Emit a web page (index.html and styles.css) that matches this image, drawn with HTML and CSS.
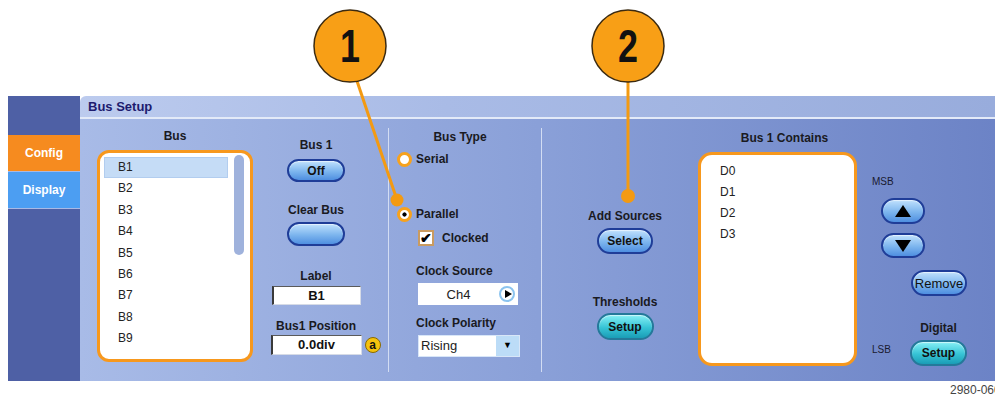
FILE: index.html
```html
<!DOCTYPE html>
<html lang="en">
<head>
<meta charset="UTF-8">
<title>Bus Setup</title>
<link rel="stylesheet" href="styles.css">
</head>
<body>
<div class="screen">

  <!-- Bus setup menu -->
  <div class="panel">
    <div class="tabs">
      <div class="tab tab-config">Config</div>
      <div class="tab tab-display">Display</div>
    </div>

    <div class="main">
      <div class="title">Bus Setup</div>
      <div class="body">

        <!-- Bus list -->
        <div class="col col-bus">
          <div class="head bus-head">Bus</div>
          <div class="listbox">
            <ul class="list">
              <li class="selected">B1</li>
              <li>B2</li>
              <li>B3</li>
              <li>B4</li>
              <li>B5</li>
              <li>B6</li>
              <li>B7</li>
              <li>B8</li>
              <li>B9</li>
            </ul>
            <div class="scrollbar"></div>
          </div>
        </div>

        <!-- Bus on/off, label, position -->
        <div class="col col-ctrl">
          <div class="head">Bus 1</div>
          <div class="pill btn-off">Off</div>
          <div class="head clear-head">Clear Bus</div>
          <div class="pill btn-clear"></div>
          <div class="head label-head">Label</div>
          <div class="field field-label">B1</div>
          <div class="head pos-head">Bus1 Position</div>
          <div class="field field-pos">0.0div<span class="badge">a</span></div>
        </div>

        <div class="divider"></div>

        <!-- Bus type -->
        <div class="col col-type">
          <div class="head type-head">Bus Type</div>
          <div class="radio-row serial-row"><span class="radio"></span>Serial</div>
          <div class="radio-row parallel-row"><span class="radio on"></span>Parallel</div>
          <div class="check-row"><span class="check">&#10004;</span>Clocked</div>
          <div class="head sub-head src-head">Clock Source</div>
          <div class="combo">
            <span class="combo-text">Ch4</span>
            <span class="play">
              <svg width="10" height="10" viewBox="0 0 10 10"><polygon points="2,1 9,5 2,9" fill="#000"/></svg>
            </span>
          </div>
          <div class="head sub-head pol-head">Clock Polarity</div>
          <div class="select">
            <span class="select-text">Rising</span>
            <span class="select-arrow">&#9660;</span>
          </div>
        </div>

        <div class="divider"></div>

        <!-- Sources and thresholds -->
        <div class="col col-src">
          <div class="head">Add Sources</div>
          <div class="pill btn-select">Select</div>
          <div class="head thr-head">Thresholds</div>
          <div class="pill teal btn-thr">Setup</div>
        </div>

        <!-- Bus contents -->
        <div class="col col-contains">
          <div class="head contains-head">Bus 1 Contains</div>
          <div class="listbox contains-box">
            <ul class="list contains-list">
              <li>D0</li>
              <li>D1</li>
              <li>D2</li>
              <li>D3</li>
            </ul>
          </div>
        </div>

        <!-- Order and digital setup -->
        <div class="col col-right">
          <div class="small">MSB</div>
          <div class="pill btn-arrow btn-up">
            <svg width="18" height="14" viewBox="0 0 18 14"><polygon points="9,1 17,13 1,13" fill="#000"/></svg>
          </div>
          <div class="pill btn-arrow btn-down">
            <svg width="18" height="14" viewBox="0 0 18 14"><polygon points="1,1 17,1 9,13" fill="#000"/></svg>
          </div>
          <div class="pill btn-remove">Remove</div>
          <div class="bottom-row">
            <div class="small lsb">LSB</div>
            <div class="digital">
              <div class="head">Digital</div>
              <div class="pill teal btn-digital">Setup</div>
            </div>
          </div>
        </div>

      </div>
    </div>
  </div>

  <div class="figure-id">2980-060</div>
</div>

<!-- Callouts -->
<svg class="callouts" width="995" height="395" viewBox="0 0 995 395">
  <line x1="357" y1="81" x2="397" y2="200" stroke="#f39a12" stroke-width="3"/>
  <circle cx="397" cy="200" r="6.5" fill="#f39a12"/>
  <ellipse cx="350" cy="46" rx="36" ry="36" fill="#f89f16" stroke="#3b2a10" stroke-width="1.5"/>
  <text class="callout-num" text-anchor="middle" transform="translate(350 62) scale(0.78 1)">1</text>

  <line x1="628" y1="81" x2="628" y2="196" stroke="#f39a12" stroke-width="3"/>
  <circle cx="628" cy="196" r="7" fill="#f39a12"/>
  <ellipse cx="628" cy="46" rx="36" ry="36" fill="#f89f16" stroke="#3b2a10" stroke-width="1.5"/>
  <text class="callout-num" text-anchor="middle" transform="translate(628 62) scale(0.78 1)">2</text>
</svg>
</body>
</html>
```

FILE: styles.css
```css
body {
  margin: 0;
  font-family: "Liberation Sans", Arial, sans-serif;
  background-color: #fff;
  color: #1a1a22;
  position: relative;
  width: 995px;
  height: 395px;
  overflow: hidden;
}

.screen {
  padding-top: 96px;
  padding-left: 8px;
}

.panel {
  display: flex;
  height: 285px;
}

/* left tabs */
.tabs {
  width: 72px;
  background-color: #4e60a5;
  padding-top: 39px;
  box-sizing: border-box;
}

.tab {
  height: 36px;
  display: flex;
  align-items: center;
  justify-content: center;
  color: #fff;
  font-weight: bold;
  font-size: 12px;
  border-bottom: 1px solid #a8b9e4;
}

.tab-config {
  background-color: #f68b1f;
}

.tab-display {
  background-color: #4c9ef2;
}

.main {
  flex: 1;
  display: flex;
  flex-direction: column;
}

.title {
  height: 21px;
  line-height: 22px;
  padding-left: 8px;
  background: linear-gradient(90deg, #bccbee, #a9bbe6 40%, #98acdc);
  border-bottom: 2px solid #e3eaf8;
  border-top-left-radius: 6px;
  font-weight: bold;
  font-size: 13px;
  color: #1d1b6e;
}

.body {
  flex: 1;
  display: flex;
  background: linear-gradient(90deg, #a8bbe7, #8aa0d8 50%, #6c83c6);
}

.col {
  display: flex;
  flex-direction: column;
  box-sizing: border-box;
}

.head {
  font-weight: bold;
  font-size: 12px;
  line-height: 14px;
  white-space: nowrap;
}

.divider {
  width: 1px;
  margin: 9px 0;
  background-color: #d3ddf3;
}

/* bus list */
.col-bus {
  width: 180px;
  padding: 10px 0 0 17px;
}

.bus-head {
  width: 156px;
  text-align: center;
}

.listbox {
  width: 156px;
  height: 212px;
  margin-top: 7px;
  border: 3px solid #f7981d;
  border-radius: 12px;
  background-color: #fff;
  box-sizing: border-box;
  display: flex;
  padding: 4px;
}

.list {
  list-style-type: none;
  margin: 0;
  padding: 0;
  width: 124px;
}

.list li {
  height: 21.4px;
  line-height: 21px;
  padding-left: 14px;
  font-size: 12px;
  color: #222;
  box-sizing: border-box;
}

.list li.selected {
  background-color: #c5dcf6;
  border: 1px solid #b2cdef;
  padding-left: 13px;
  line-height: 19px;
}

.scrollbar {
  width: 10px;
  height: 100px;
  margin: -2px 0 0 6px;
  border-radius: 5px;
  background-color: #9fb2dc;
}

/* buttons */
.pill {
  display: flex;
  align-items: center;
  justify-content: center;
  box-sizing: border-box;
  border: 2px solid #1f3d98;
  border-radius: 14px;
  background: linear-gradient(#c0e1fd, #7cb5ee 55%, #4f8fe0);
  font-weight: bold;
  font-size: 12px;
  color: #111;
  box-shadow: inset 0 1px 1px rgba(255,255,255,0.6);
}

.pill.teal {
  background: linear-gradient(#86f0f6, #36c3d5 55%, #1a9db6);
  border-color: #24799a;
}

/* bus controls */
.col-ctrl {
  width: 128px;
  padding: 19px 16px 0 0;
  align-items: center;
}

.btn-off {
  width: 58px;
  height: 23px;
  margin-top: 7px;
}

.clear-head {
  margin-top: 21px;
}

.btn-clear {
  width: 58px;
  height: 24px;
  margin-top: 5px;
}

.label-head {
  margin-top: 23px;
}

.field {
  background-color: #fff;
  border: 1px solid #d6dbe6;
  border-top-color: #5a5a5a;
  border-left: 2px solid #3a3a3a;
  box-sizing: border-box;
  text-align: center;
  font-weight: bold;
  font-size: 13px;
  color: #111;
}

.field-label {
  width: 89px;
  height: 19px;
  line-height: 17px;
  margin-top: 3px;
}

.pos-head {
  margin-top: 14px;
}

.field-pos {
  position: relative;
  width: 91px;
  height: 20px;
  line-height: 18px;
  margin-top: 2px;
}

.badge {
  position: absolute;
  right: -20px;
  top: 1px;
  width: 16px;
  height: 16px;
  line-height: 15px;
  border-radius: 50%;
  background-color: #f4c20d;
  border: 1px solid #8a6a00;
  box-sizing: border-box;
  font-size: 12px;
  color: #111;
}

/* bus type */
.col-type {
  width: 152px;
  padding: 11px 0 0 8px;
}

.type-head {
  width: 126px;
  text-align: center;
}

.radio-row {
  display: flex;
  align-items: center;
  gap: 4px;
  height: 14px;
  font-weight: bold;
  font-size: 12px;
}

.serial-row {
  margin-top: 8px;
}

.parallel-row {
  margin-top: 41px;
}

.radio {
  width: 15px;
  height: 15px;
  border-radius: 50%;
  border: 3px solid #f7a21d;
  background-color: #fff;
  box-sizing: border-box;
}

.radio.on {
  background: radial-gradient(circle, #000 0, #000 1.8px, #fff 2.4px);
}

.check-row {
  display: flex;
  align-items: center;
  gap: 8px;
  margin: 10px 0 0 21px;
  height: 14px;
  font-weight: bold;
  font-size: 12px;
}

.check {
  width: 16px;
  height: 16px;
  border: 2px solid #c99b60;
  background-color: #fff;
  box-sizing: border-box;
  font-size: 14px;
  line-height: 13px;
  text-align: center;
  color: #000;
}

.sub-head {
  margin-left: 19px;
}

.src-head {
  margin-top: 19px;
}

.combo {
  display: flex;
  align-items: center;
  width: 100px;
  height: 22px;
  margin: 5px 0 0 21px;
  background-color: #fff;
  box-sizing: border-box;
}

.combo-text {
  flex: 1;
  text-align: center;
  font-size: 13px;
  color: #222;
}

.play {
  width: 16px;
  height: 16px;
  margin-right: 3px;
  border-radius: 50%;
  border: 2px solid #8cc4ef;
  box-sizing: border-box;
  display: flex;
  align-items: center;
  justify-content: center;
}

.play svg {
  margin-left: 1px;
}

.pol-head {
  margin-top: 11px;
}

.select {
  display: flex;
  width: 102px;
  height: 22px;
  margin: 5px 0 0 21px;
  border: 1px solid #d8e6f8;
  background-color: #fff;
  box-sizing: border-box;
}

.select-text {
  flex: 1;
  padding-left: 2px;
  line-height: 20px;
  font-size: 13px;
  color: #222;
}

.select-arrow {
  width: 23px;
  background-color: #bcdcf7;
  text-align: center;
  line-height: 19px;
  font-size: 9px;
  color: #000;
}

/* sources */
.col-src {
  width: 156px;
  padding: 90px 0 0 10px;
  align-items: center;
}

.btn-select {
  width: 56px;
  height: 26px;
  margin-top: 5px;
}

.thr-head {
  margin-top: 41px;
}

.btn-thr {
  width: 57px;
  height: 27px;
  margin-top: 4px;
}

/* contents */
.col-contains {
  width: 159px;
  padding-top: 12px;
}

.contains-head {
  padding-left: 14px;
  text-align: center;
}

.contains-box {
  width: 159px;
  height: 214px;
  border-radius: 14px;
  padding: 6px 0 0 0;
}

.contains-list li {
  height: 21px;
  padding-left: 19px;
}

/* order controls */
.col-right {
  flex: 1;
  padding: 57px 0 0 15px;
}

.small {
  font-size: 10px;
  line-height: 12px;
  color: #1a1a30;
}

.btn-arrow {
  width: 44px;
  height: 26px;
  margin: 10px 0 0 9px;
}

.btn-down {
  height: 25px;
  margin-top: 9px;
}

.btn-remove {
  width: 56px;
  height: 26px;
  margin: 12px 0 0 39px;
  font-weight: normal;
  font-size: 13px;
}

.bottom-row {
  display: flex;
  align-items: flex-end;
  margin-top: 25px;
}

.lsb {
  width: 38px;
  margin-bottom: 10px;
}

.digital {
  width: 57px;
  display: flex;
  flex-direction: column;
  align-items: center;
}

.btn-digital {
  width: 57px;
  height: 26px;
  margin-top: 5px;
}

.figure-id {
  padding: 2px 0 0 942px;
  white-space: nowrap;
  font-size: 12px;
  color: #444;
}

/* callout overlay */
.callouts {
  position: absolute;
  left: 0;
  top: 0;
  pointer-events: none;
}

.callout-num {
  font-family: "Liberation Sans", Arial, sans-serif;
  font-weight: bold;
  font-size: 46px;
  fill: #111;
}
```
